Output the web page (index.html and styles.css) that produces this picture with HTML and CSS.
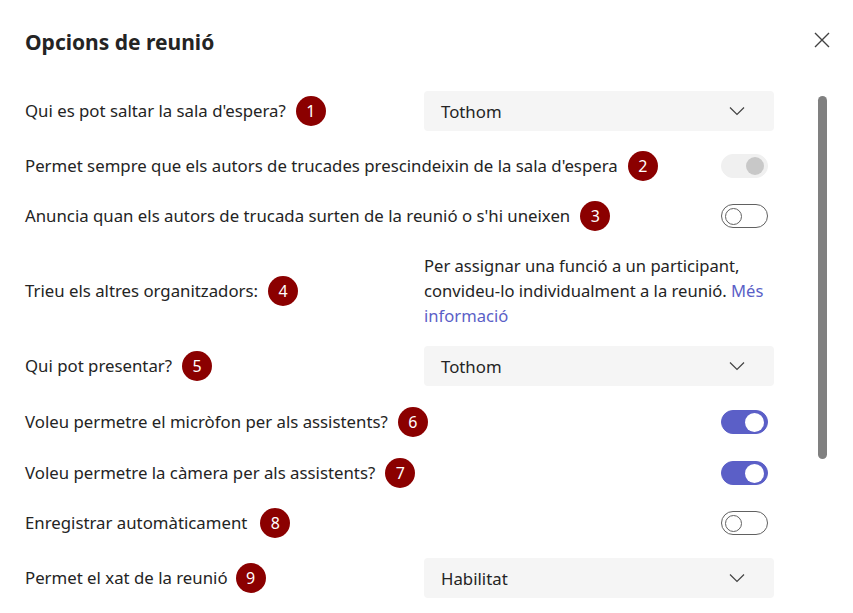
FILE: index.html
```html
<!DOCTYPE html>
<html>
<head>
  <title>Opcions de reunió</title>
  <link rel="stylesheet" href="styles.css">
</head>
<body>
  <div class="panel">
    <div class="header">
      <h1>Opcions de reunió</h1>
      <button class="close-btn" aria-label="Tanca">
        <svg width="18" height="18" viewBox="0 0 18 18"><path d="M2 2 L16 16 M16 2 L2 16" stroke="#424242" stroke-width="1.4" fill="none"/></svg>
      </button>
    </div>

    <div class="options">
      <div class="row row-select">
        <div class="label">Qui es pot saltar la sala d'espera? <span class="badge">1</span></div>
        <div class="select"><span>Tothom</span><svg class="chev" width="16" height="10" viewBox="0 0 16 10"><path d="M1 1.5 L8 8.5 L15 1.5" stroke="#424242" stroke-width="1.2" fill="none"/></svg></div>
      </div>

      <div class="row">
        <div class="label">Permet sempre que els autors de trucades prescindeixin de la sala d'espera <span class="badge">2</span></div>
        <div class="toggle disabled"><span class="knob"></span></div>
      </div>

      <div class="row">
        <div class="label">Anuncia quan els autors de trucada surten de la reunió o s'hi uneixen <span class="badge">3</span></div>
        <div class="toggle"><span class="knob"></span></div>
      </div>

      <div class="row row-info">
        <div class="label">Trieu els altres organitzadors: <span class="badge">4</span></div>
        <div class="info">Per assignar una funció a un participant,<br>convideu-lo individualment a la reunió. <a href="#">Més</a><br><a href="#">informació</a></div>
      </div>

      <div class="row row-select">
        <div class="label">Qui pot presentar? <span class="badge">5</span></div>
        <div class="select"><span>Tothom</span><svg class="chev" width="16" height="10" viewBox="0 0 16 10"><path d="M1 1.5 L8 8.5 L15 1.5" stroke="#424242" stroke-width="1.2" fill="none"/></svg></div>
      </div>

      <div class="row row-shift">
        <div class="label">Voleu permetre el micròfon per als assistents? <span class="badge">6</span></div>
        <div class="toggle on"><span class="knob"></span></div>
      </div>

      <div class="row row-shift">
        <div class="label">Voleu permetre la càmera per als assistents? <span class="badge">7</span></div>
        <div class="toggle on"><span class="knob"></span></div>
      </div>

      <div class="row">
        <div class="label">Enregistrar automàticament <span class="badge wide">8</span></div>
        <div class="toggle"><span class="knob"></span></div>
      </div>

      <div class="row row-select">
        <div class="label">Permet el xat de la reunió <span class="badge narrow">9</span></div>
        <div class="select"><span>Habilitat</span><svg class="chev" width="16" height="10" viewBox="0 0 16 10"><path d="M1 1.5 L8 8.5 L15 1.5" stroke="#424242" stroke-width="1.2" fill="none"/></svg></div>
      </div>
    </div>

    <div class="scrollbar"></div>
  </div>
</body>
</html>
```

FILE: styles.css
```css
body {
  margin: 0;
  background: #fff;
  font-family: "Segoe UI", "Noto Sans", sans-serif;
  color: #242424;
  overflow: hidden;
}
.panel {
  position: relative;
  width: 853px;
  height: 613px;
  padding: 28px 79px 0 25px;
  box-sizing: border-box;
}
.header {
  display: flex;
  justify-content: space-between;
  align-items: center;
  height: 28px;
  margin-bottom: 35px;
}
h1 {
  margin: 0;
  font-size: 21px;
  font-weight: 700;
  line-height: 28px;
}
.close-btn {
  background: none;
  border: none;
  padding: 0;
  margin-right: -57px;
  margin-top: -4px;
  width: 18px;
  height: 18px;
  cursor: pointer;
}
.options {
  display: flex;
  flex-direction: column;
  gap: 20px;
}
.row {
  display: flex;
  justify-content: space-between;
  align-items: center;
  min-height: 30px;
}
.row-select {
  min-height: 40px;
}
.row-info {
  min-height: 75px;
  margin-top: 2px;
  margin-bottom: -2px;
}
.row-shift {
  margin-top: 1px;
}
.label {
  font-size: 16.8px;
  line-height: 24px;
  display: flex;
  align-items: center;
  white-space: nowrap;
}
.badge {
  display: inline-flex;
  align-items: center;
  justify-content: center;
  width: 30px;
  height: 30px;
  border-radius: 50%;
  background: #8b0000;
  color: #fff;
  font-size: 16px;
  margin-left: 10px;
}
.badge.wide {
  margin-left: 13px;
}
.badge.narrow {
  margin-left: 8px;
}
.select {
  width: 350px;
  height: 40px;
  background: #f5f5f5;
  border-radius: 4px;
  display: flex;
  align-items: center;
  justify-content: space-between;
  padding: 0 29px 0 17px;
  box-sizing: border-box;
  font-size: 16.8px;
}
.info {
  width: 350px;
  font-size: 16.6px;
  line-height: 25px;
}
.info a {
  color: #5b5fc7;
  text-decoration: none;
}
.toggle {
  width: 47px;
  height: 24px;
  border-radius: 12px;
  border: 1px solid #616161;
  box-sizing: border-box;
  background: #fff;
  margin-right: 6px;
  display: flex;
  align-items: center;
  padding: 0 3px;
}
.toggle .knob {
  width: 17px;
  height: 17px;
  border-radius: 50%;
  border: 1px solid #616161;
  box-sizing: border-box;
  background: #fff;
}
.toggle.on {
  background: #5b5fc7;
  border-color: #5b5fc7;
  justify-content: flex-end;
}
.toggle.on .knob {
  border: none;
  width: 19px;
  height: 19px;
}
.toggle.disabled {
  background: #f0f0f0;
  border-color: #f0f0f0;
  justify-content: flex-end;
}
.toggle.disabled .knob {
  border: none;
  background: #c8c8c8;
  width: 18px;
  height: 18px;
}
.scrollbar {
  position: absolute;
  left: 818px;
  top: 96px;
  width: 9px;
  height: 363px;
  border-radius: 5px;
  background: #808080;
}
```
